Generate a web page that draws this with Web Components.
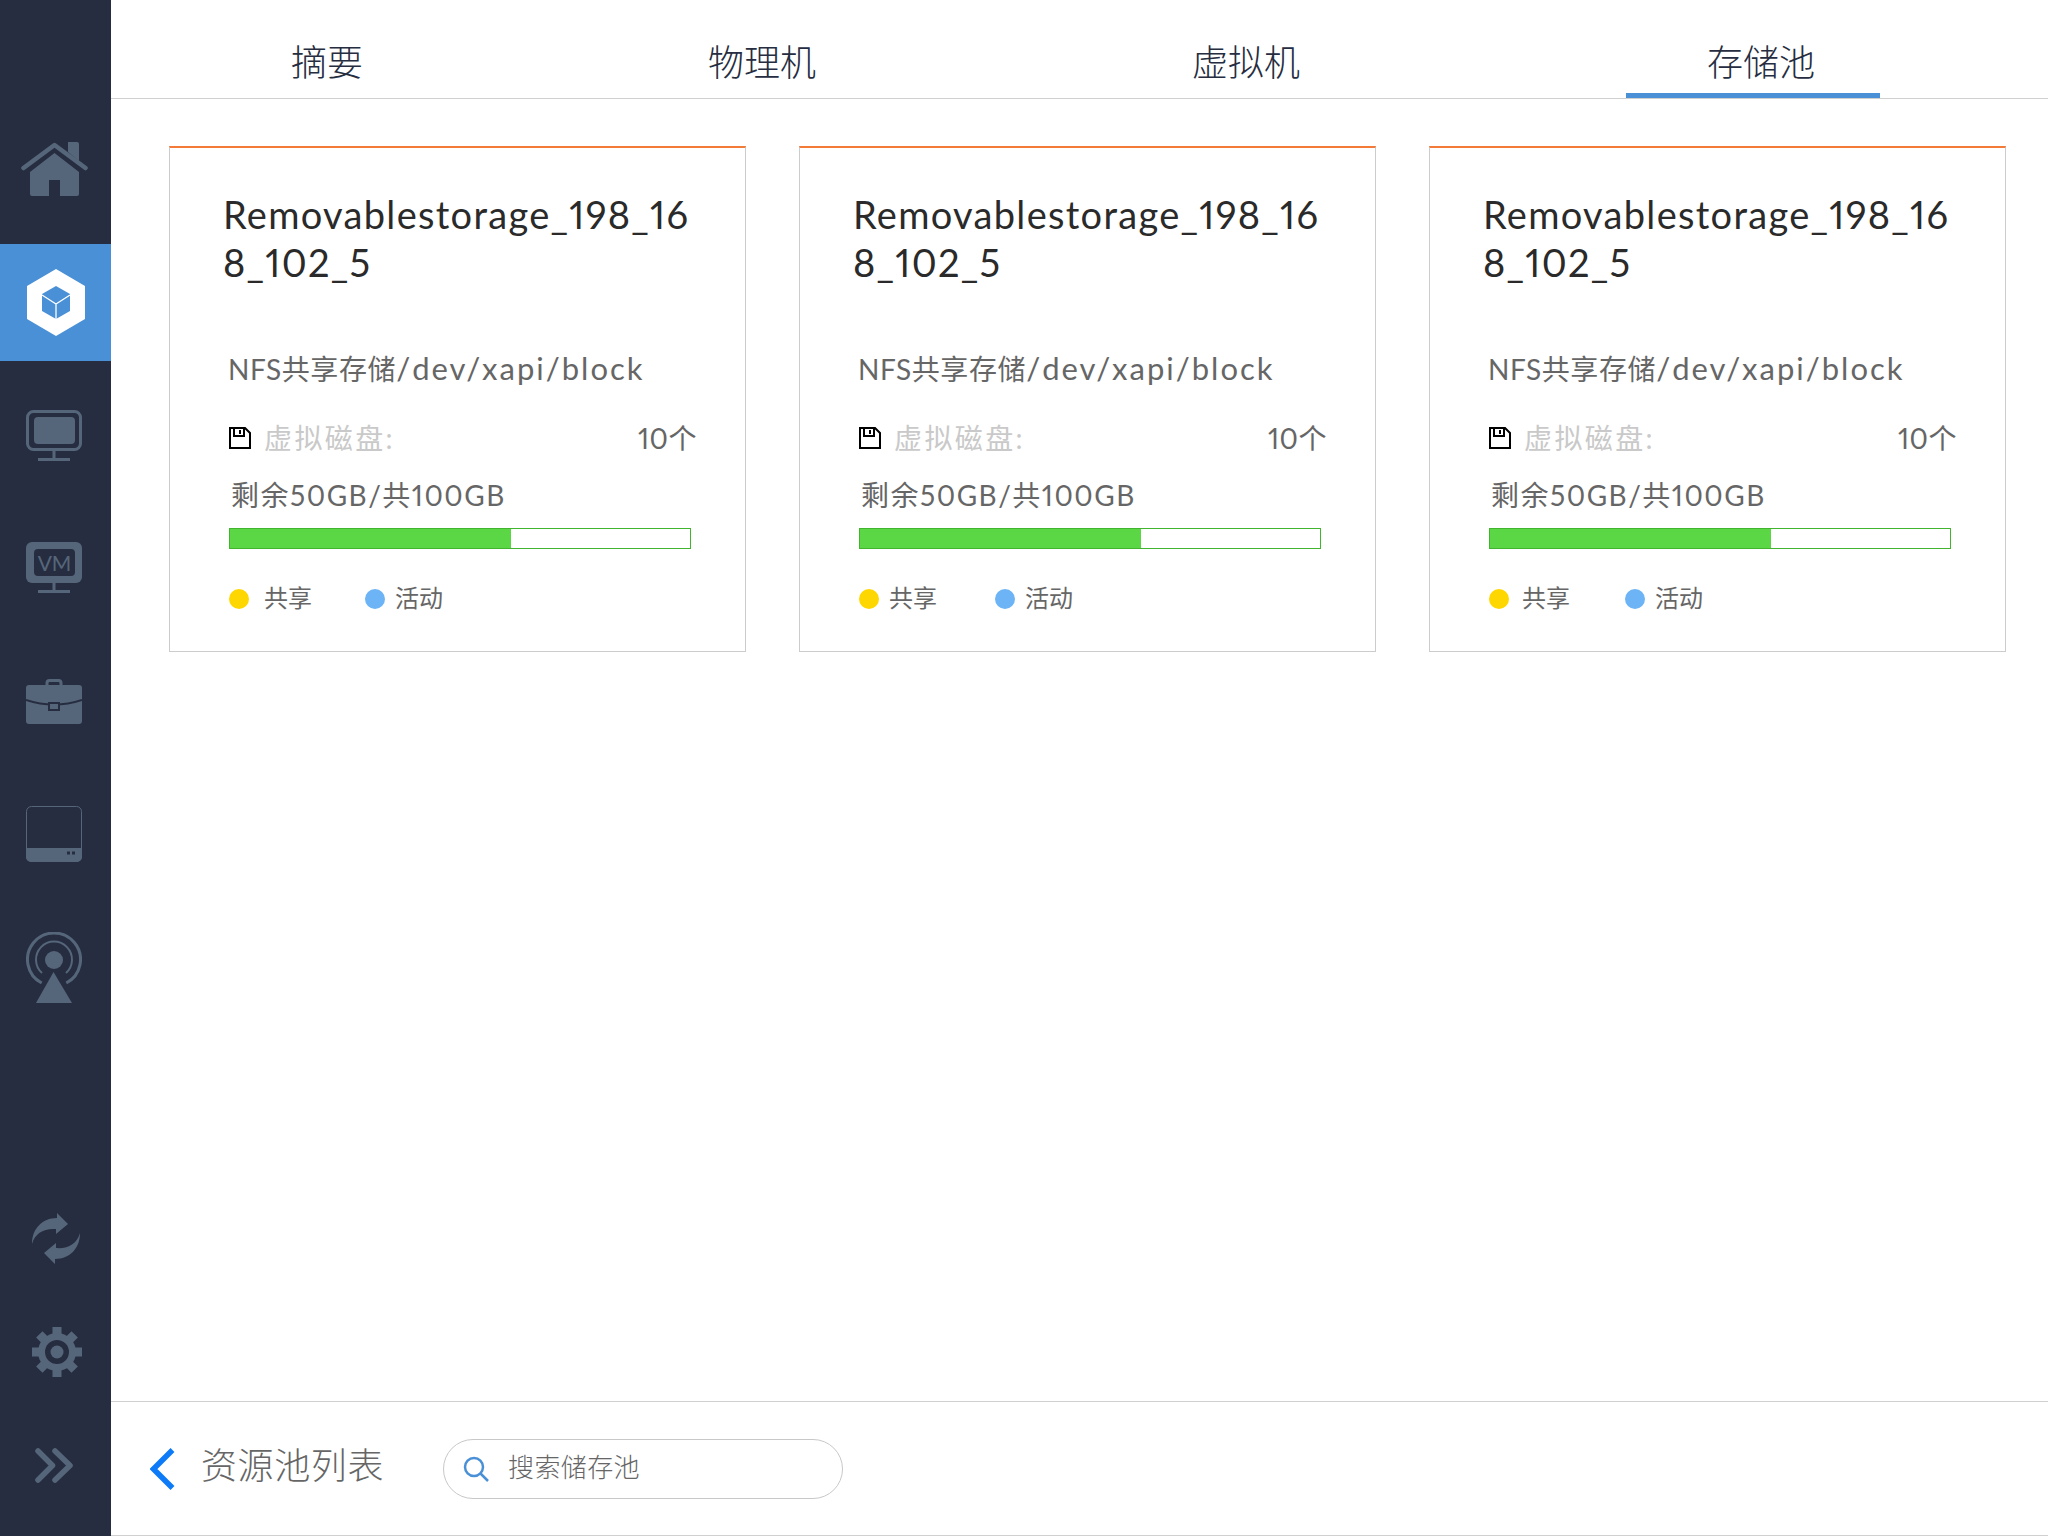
<!DOCTYPE html>
<html lang="zh">
<head>
<meta charset="utf-8">
<title>存储池</title>
<style>
    html, body { margin: 0; height: 100%; background: #fff; }
    body { font-family: Lato, "Noto Sans CJK SC", sans-serif; }
</style>
</head>
<body>
<app-shell>
    <side-bar slot="side">
        <nav-item size="150">
            <svg width="67" height="54" viewBox="0 0 67 54"><path fill="#56667a" d="M47 0h9a2 2 0 0 1 2 2v17l-11-9zM33.5 11 58 30v22a2 2 0 0 1-2 2H39V38H28v16H11a2 2 0 0 1-2-2V30z"/><path fill="none" stroke="#56667a" stroke-width="4.5" stroke-linecap="round" stroke-linejoin="round" d="M2.5 26 33.5 3l31 23"/></svg>
        </nav-item>
        <nav-item size="117" active>
            <svg width="58" height="67" viewBox="0 0 58 67"><path fill="#fff" d="M29 0l29 17v33L29 67 0 50V17z"/><path fill="#4a90d6" d="M29 17l14 8v17l-14 8-14-8V25z"/><path fill="none" stroke="#fff" stroke-width="1.3" d="M15 26l14 9 14-9M29 35v15"/></svg>
        </nav-item>
        <nav-item size="149">
            <svg width="56" height="51" viewBox="0 0 56 51"><rect x="1.5" y="1.5" width="53" height="38" rx="6" fill="none" stroke="#56667a" stroke-width="3"/><rect x="8" y="7" width="41" height="27" rx="4" fill="#56667a"/><path fill="none" stroke="#56667a" stroke-width="3" d="M28 40v9M12 49.500h32"/></svg>
        </nav-item>
        <nav-item size="115">
            <svg width="56" height="51" viewBox="0 0 56 51"><rect width="56" height="41" rx="6" fill="#56667a"/><rect x="8" y="7" width="41" height="27" rx="4" fill="#262d40"/><text x="28.500" y="28.500" text-anchor="middle" font-family="Lato, sans-serif" font-size="21" fill="#56667a">VM</text><path fill="none" stroke="#56667a" stroke-width="3" d="M28 40v9M12 49.500h32"/></svg>
        </nav-item>
        <nav-item size="153">
            <svg width="56" height="45" viewBox="0 0 56 45"><path fill="none" stroke="#56667a" stroke-width="3" d="M21 7V4a2.500 2.500 0 0 1 2.500-2.500h9A2.500 2.500 0 0 1 35 4v3"/><rect y="6" width="56" height="39" rx="3" fill="#56667a"/><path fill="none" stroke="#262d40" stroke-width="2" d="M0 21c18 6 38 6 56 0"/><rect x="23" y="24" width="10" height="7" fill="#56667a" stroke="#262d40" stroke-width="2"/></svg>
        </nav-item>
        <nav-item size="112">
            <svg width="56" height="56" viewBox="0 0 56 56"><rect x=".5" y=".5" width="55" height="55" rx="5" fill="none" stroke="#56667a"/><path fill="#56667a" d="M0 42h56v9a5 5 0 0 1-5 5H5a5 5 0 0 1-5-5z"/><path fill="#262d40" d="M41 45.500h3v3h-3zM46 45.500h3v3h-3z"/></svg>
        </nav-item>
        <nav-item size="155">
            <svg width="56" height="71" viewBox="0 0 56 71"><g fill="none" stroke="#56667a"><path stroke-width="3" d="M15.700 51A26.500 26.500 0 1 1 40.300 51"/><path stroke-width="2" d="M16 41A18 18 0 1 1 40 41"/></g><circle cx="28" cy="28" r="9" fill="#56667a"/><path fill="#56667a" d="M27.500 40 46 71H10z"/></svg>
        </nav-item>
        <span class="push"></span>
        <nav-item size="142">
            <svg width="48" height="51" viewBox="0 0 48 51" style="margin-left:4px"><g fill="#56667a"><path d="M0 31C0 16 10 5 25 5V0l11 11-12 10v-5C12 15 3 20 0 31z"/><path transform="rotate(180 24 25.500)" d="M0 31C0 16 10 5 25 5V0l11 11-12 10v-5C12 15 3 20 0 31z"/></g></svg>
        </nav-item>
        <nav-item size="86">
            <svg width="50" height="50" viewBox="0 0 50 50" style="margin-left:6px"><g fill="#56667a"><circle cx="25" cy="25" r="19"/><rect x="20.500" width="9" height="50"/><rect y="20.500" width="50" height="9"/><rect x="20.500" width="9" height="50" transform="rotate(45 25 25)"/><rect x="20.500" width="9" height="50" transform="rotate(-45 25 25)"/></g><circle cx="25" cy="25" r="12" fill="#262d40"/><circle cx="25" cy="25" r="6.500" fill="#56667a"/></svg>
        </nav-item>
        <nav-item size="141">
            <svg width="38" height="35" viewBox="0 0 38 35"><path fill="none" stroke="#56667a" stroke-width="5.500" stroke-linecap="round" stroke-linejoin="round" d="M3 3l14.500 14.500L3 32M20 3l15 14.500L20 32"/></svg>
        </nav-item>
    </side-bar>

    <tab-bar slot="tabs">
        <tab-item style="margin-left:180px">摘要</tab-item>
        <tab-item style="margin-left:345px">物理机</tab-item>
        <tab-item style="margin-left:376px">虚拟机</tab-item>
        <tab-item active style="margin-left:326px">存储池</tab-item>
    </tab-bar>

    <storage-card slot="cards" legend-gap="15"></storage-card>
    <storage-card slot="cards" legend-gap="10"></storage-card>
    <storage-card slot="cards" legend-gap="13"></storage-card>

    <pool-footer slot="footer"></pool-footer>
</app-shell>

<script>
class AppShell extends HTMLElement {
    constructor() {
        super()
        this.attachShadow({ mode: 'open' }).innerHTML = `
            <style>
                :host { display: flex; width: 2048px; height: 1536px; overflow: hidden; }
                main { flex: 1; min-width: 0; display: flex; flex-direction: column; }
                .cards {
                    flex: 1;
                    display: grid;
                    grid-template-columns: repeat(3, 577px);
                    column-gap: 53px;
                    align-content: start;
                    padding: 47px 0 0 58px;
                }
            </style>
            <slot name="side"></slot>
            <main>
                <slot name="tabs"></slot>
                <div class="cards"><slot name="cards"></slot></div>
                <slot name="footer"></slot>
            </main>`
    }
}
customElements.define('app-shell', AppShell)

class SideBar extends HTMLElement {
    constructor() {
        super()
        this.attachShadow({ mode: 'open' }).innerHTML = `
            <style>
                :host {
                    display: flex;
                    flex-direction: column;
                    flex: none;
                    width: 111px;
                    height: 1536px;
                    padding-top: 94px;
                    box-sizing: border-box;
                    background: #262d40;
                }
                ::slotted(.push) { flex: 1; }
            </style>
            <slot></slot>`
    }
}
customElements.define('side-bar', SideBar)

class NavItem extends HTMLElement {
    constructor() {
        super()
        this.attachShadow({ mode: 'open' }).innerHTML = `
            <style>
                :host { display: flex; align-items: center; justify-content: center; padding-right: 3px; box-sizing: border-box; }
                :host([active]) { background: #4a90d6; padding: 0 0 0 1px; }
                ::slotted(svg) { display: block; }
            </style>
            <slot></slot>`
    }

    connectedCallback() {
        this.style.height = this.getAttribute('size') + 'px'
    }
}
customElements.define('nav-item', NavItem)

class TabBar extends HTMLElement {
    constructor() {
        super()
        this.attachShadow({ mode: 'open' }).innerHTML = `
            <style>
                :host {
                    display: flex;
                    flex: none;
                    height: 99px;
                    box-sizing: border-box;
                    border-bottom: 1px solid #d0d0d0;
                }
            </style>
            <slot></slot>`
    }
}
customElements.define('tab-bar', TabBar)

class TabItem extends HTMLElement {
    constructor() {
        super()
        this.attachShadow({ mode: 'open' }).innerHTML = `
            <style>
                :host {
                    display: block;
                    height: 98px;
                    box-sizing: border-box;
                    padding-top: 39px;
                    font-size: 36px;
                    font-weight: 300;
                    line-height: 46px;
                    color: #262d40;
                }
                :host([active]) {
                    padding: 39px 65px 0 81px;
                    border-bottom: 5px solid #4a90d6;
                }
            </style>
            <slot></slot>`
    }
}
customElements.define('tab-item', TabItem)

const cardTemplate = document.createElement('template')
cardTemplate.innerHTML = `
    <style>
        :host {
            display: block;
            height: 506px;
            box-sizing: border-box;
            border: 1px solid #cccccc;
            border-top: 2px solid #f47b37;
            padding: 42px 48px 0 59px;
            color: #666;
            font-variant-numeric: proportional-nums;
        }
        h2 {
            margin: 0 0 0 -6px;
            width: 475px;
            font-size: 38px;
            font-weight: 400;
            line-height: 48px;
            letter-spacing: 1.3px;
            color: #2a2a2a;
            word-break: break-all;
        }
        .path { margin: 63px 0 0 -1px; height: 40px; font-size: 28px; line-height: 38px; letter-spacing: .6px; white-space: nowrap; }
        .path span { font-size: 31px; letter-spacing: 2px; }
        .disks { display: flex; align-items: center; margin-top: 28px; height: 40px; font-size: 28px; }
        .disks svg { flex: none; margin: 2px 13px 0 0; }
        .disks span { color: #c9c9c9; letter-spacing: 2.4px; }
        .disks b { margin-left: auto; font-weight: 400; letter-spacing: .5px; }
        .usage { margin: 18px 0 0 2px; font-size: 28px; line-height: 40px; letter-spacing: 1.5px; }
        .bar {
            width: 462px;
            height: 21px;
            margin-top: 13px;
            box-sizing: border-box;
            border: 1px solid #41b52e;
        }
        .bar div { width: 61%; height: 100%; background: #5bd645; }
        .legend { display: flex; margin-top: 40px; height: 20px; font-size: 24px; line-height: 20px; }
    </style>
    <h2>Removablestorage_198_168_102_5</h2>
    <div class="path">NFS共享存储<span>/dev/xapi/block</span></div>
    <div class="disks">
        <svg width="22" height="22" viewBox="0 0 22 22"><path fill="none" stroke="#000" stroke-width="2" d="M1 1h15l5 5v15H1zM5 1v8h10V1M11 3v4"/></svg>
        <span>虚拟磁盘:</span><b>10个</b>
    </div>
    <div class="usage">剩余50GB/共100GB</div>
    <div class="bar"><div></div></div>
    <div class="legend">
        <legend-dot color="#ffd700" width="136">共享</legend-dot>
        <legend-dot color="#6cb4f5" width="120" gap="10">活动</legend-dot>
    </div>`

class StorageCard extends HTMLElement {
    constructor() {
        super()
        this.attachShadow({ mode: 'open' }).appendChild(cardTemplate.content.cloneNode(true))
    }

    connectedCallback() {
        const gap = this.getAttribute('legend-gap')
        this.shadowRoot.querySelectorAll('legend-dot').forEach(dot => {
            dot.style.setProperty('--dot-gap', (dot.getAttribute('gap') || gap) + 'px')
        })
    }
}

class LegendDot extends HTMLElement {
    constructor() {
        super()
        this.attachShadow({ mode: 'open' }).innerHTML = `
            <style>
                :host { display: flex; align-items: center; flex: none; white-space: nowrap; }
                i { width: 20px; height: 20px; border-radius: 50%; margin-right: var(--dot-gap, 14px); background: var(--dot-color); }
                span { margin-top: -2px; }
            </style>
            <i></i><span><slot></slot></span>`
    }

    connectedCallback() {
        this.style.setProperty('--dot-color', this.getAttribute('color'))
        this.style.width = this.getAttribute('width') + 'px'
    }
}
customElements.define('legend-dot', LegendDot)
customElements.define('storage-card', StorageCard)

class PoolFooter extends HTMLElement {
    constructor() {
        super()
        this.attachShadow({ mode: 'open' }).innerHTML = `
            <style>
                :host {
                    display: flex;
                    align-items: center;
                    flex: none;
                    height: 135px;
                    box-sizing: border-box;
                    padding-left: 39px;
                    border-top: 1px solid #d0d0d0;
                    border-bottom: 1px solid #d0d0d0;
                    color: #666;
                }
                .back { flex: none; margin-right: 26px; }
                .title { font-size: 36px; font-weight: 300; letter-spacing: .6px; line-height: 46px; margin-top: -7px; }
                .search {
                    display: flex;
                    align-items: center;
                    width: 400px;
                    height: 60px;
                    box-sizing: border-box;
                    margin: 0 0 0 59px;
                    padding-left: 19px;
                    border: 1px solid #c8c8c8;
                    border-radius: 30px;
                    font-size: 26px;
                    font-weight: 300;
                    letter-spacing: .4px;
                }
                .search svg { flex: none; margin-right: 19px; }
                .search span { margin-top: -7px; }
            </style>
            <svg class="back" width="25" height="42" viewBox="0 0 25 42"><path fill="none" stroke="#0d7bf7" stroke-width="5.500" d="M22.500 2 3.500 21l19 19"/></svg>
            <span class="title">资源池列表</span>
            <div class="search">
                <svg width="26" height="26" viewBox="0 0 26 26"><g fill="none" stroke="#4a90d6" stroke-width="2.500"><circle cx="11" cy="11" r="9"/><path d="M17.500 17.500 25 25"/></g></svg>
                <span>搜索储存池</span>
            </div>`
    }
}
customElements.define('pool-footer', PoolFooter)
</script>
</body>
</html>
